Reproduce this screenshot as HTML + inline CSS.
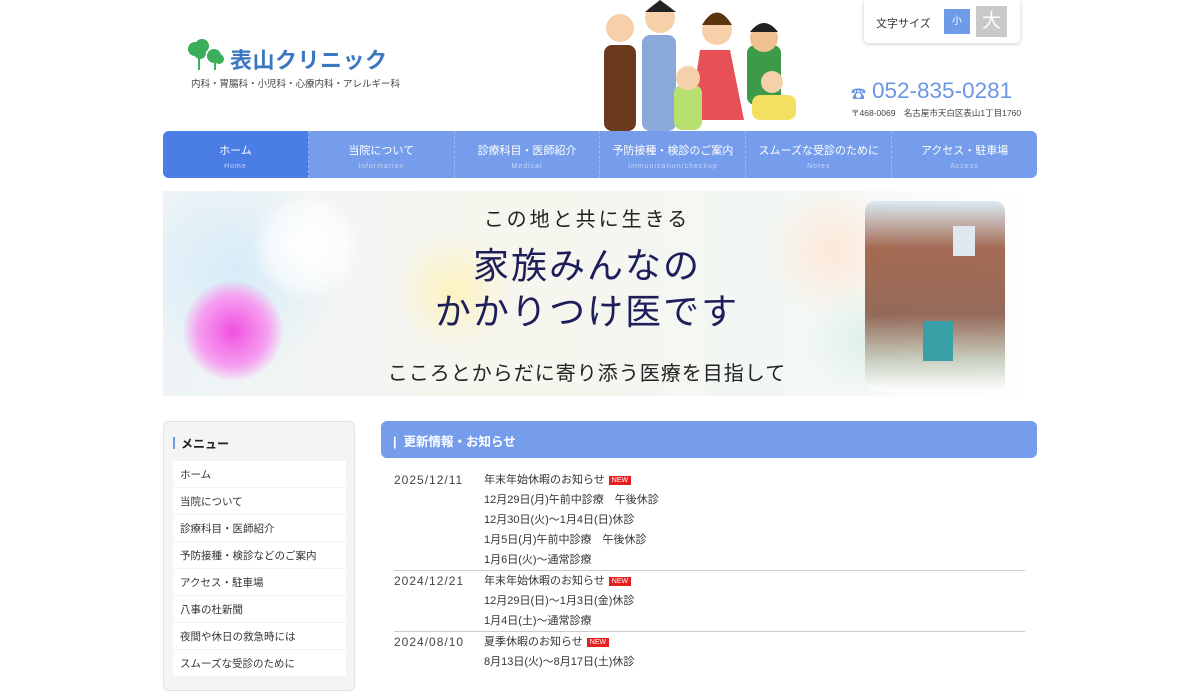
<!DOCTYPE html>
<html><head><meta charset="utf-8"><style>
*{margin:0;padding:0;box-sizing:border-box}
body{width:1200px;height:675px;overflow:hidden;background:#fff;font-family:"Liberation Sans","Noto Sans CJK JP",sans-serif;color:#333;position:relative}
.abs{position:absolute}
.nav{left:163px;top:131px;width:874px;height:47px;background:#759deb;border-radius:6px;display:flex;overflow:hidden}
.nav div{flex:1;text-align:center;color:#fff;font-size:11px;padding-top:11px;border-right:1px dashed #9cb9f0}
.nav div:last-child{border:none}
.nav div span{display:block;font-size:7px;letter-spacing:1px;color:#c9d8f7;margin-top:5px}
.nav div.on{background:#4a7de6}
.side{left:163px;top:421px;width:192px;height:270px;background:#f4f4f4;border:1px solid #e2e2e2;border-radius:5px}
.side .it{position:absolute;left:9px;width:173px;height:26px;background:#fff;font-size:10.5px;padding:6px 0 0 7px;color:#333}
.news{left:381px;top:421px;width:656px;height:37px;background:#759deb;border-radius:6px;color:#fff;font-size:12.5px;font-weight:bold;padding:10px 0 0 12px}
.row{position:absolute;font-size:11px;color:#333}
.date{font-size:12px;letter-spacing:1px;color:#444}
.new{display:inline-block;background:#e52020;color:#fff;font-size:7px;line-height:9px;padding:0 3px;margin-left:4px;vertical-align:1px}
.hr{position:absolute;left:394px;width:631px;height:1px;background:#ccc}
</style></head><body>
<svg class="abs" style="left:186px;top:38px" width="40" height="34" viewBox="0 0 40 34">
<circle cx="9" cy="11" r="7" fill="#3aae5a"/><circle cx="16" cy="8" r="7" fill="#3aae5a"/><circle cx="14" cy="15" r="6" fill="#3aae5a"/>
<circle cx="28" cy="18" r="7" fill="#3aae5a"/><circle cx="33" cy="21" r="5" fill="#3aae5a"/>
<rect x="12" y="18" width="2" height="14" fill="#3aae5a"/><rect x="28" y="22" width="2" height="10" fill="#3aae5a"/></svg>
<div class="abs" style="left:230px;top:43px;font-size:22px;font-weight:bold;color:#3a78c0;letter-spacing:0.5px">表山クリニック</div>
<div class="abs" style="left:191px;top:76px;font-size:9.5px;color:#444">内科・胃腸科・小児科・心療内科・アレルギー科</div>
<svg class="abs" style="left:592px;top:0" width="212" height="131" viewBox="0 0 212 131">
<rect x="12" y="45" width="32" height="86" rx="8" fill="#6b3a1e"/><circle cx="28" cy="28" r="14" fill="#f6d0a8"/>
<rect x="50" y="35" width="34" height="96" rx="8" fill="#8aa9d8"/><circle cx="68" cy="18" r="15" fill="#f6d0a8"/><path d="M53 12 L68 0 L84 12Z" fill="#222"/>
<path d="M108 50 L138 50 L152 120 L98 120Z" fill="#e85058"/><circle cx="125" cy="30" r="15" fill="#f6d0a8"/><path d="M110 25 Q125 0 140 25" fill="#5a3510"/>
<rect x="155" y="45" width="34" height="60" rx="8" fill="#3d9a48"/><circle cx="172" cy="38" r="14" fill="#f0c090"/><path d="M158 32 Q172 14 186 32" fill="#222"/>
<rect x="82" y="85" width="28" height="45" rx="8" fill="#b6e070"/><circle cx="96" cy="78" r="12" fill="#f6d0a8"/>
<rect x="160" y="95" width="44" height="25" rx="8" fill="#f4e060"/><circle cx="180" cy="82" r="11" fill="#f6d0a8"/>
</svg>
<div class="abs" style="left:864px;top:0;width:156px;height:43px;background:#fff;box-shadow:0 1px 4px rgba(0,0,0,.2);border-radius:0 0 4px 4px"></div>
<div class="abs" style="left:876px;top:15px;font-size:11px">文字サイズ</div>
<div class="abs" style="left:944px;top:9px;width:26px;height:25px;background:#6d9be8;color:#fff;font-size:10px;text-align:center;line-height:25px">小</div>
<div class="abs" style="left:976px;top:6px;width:31px;height:31px;background:#c9c9c9;color:#fff;font-size:19px;text-align:center;line-height:31px">大</div>
<div class="abs" style="left:851px;top:83px;font-size:15px;color:#6b96e4">&#9742;</div>
<div class="abs" style="left:872px;top:78px;font-size:22.5px;color:#6b96e4">052-835-0281</div>
<div class="abs" style="left:851px;top:107px;font-size:8.5px;color:#444">〒468-0069　名古屋市天白区表山1丁目1760</div>
<div class="abs nav"><div class="on">ホーム<span>Home</span></div><div>当院について<span>Information</span></div><div>診療科目・医師紹介<span>Medical</span></div><div>予防接種・検診のご案内<span>Immunization/checkup</span></div><div>スムーズな受診のために<span>Notes</span></div><div>アクセス・駐車場<span>Access</span></div></div>
<div class="abs" style="left:163px;top:191px;width:874px;height:205px;overflow:hidden;background:linear-gradient(90deg,#eef4f7,#f7f6ee 40%,#f2f7f4 70%,#fff)">
<div class="abs" style="left:-40px;top:-30px;width:220px;height:220px;border-radius:50%;background:radial-gradient(#d6ecf8,rgba(214,236,248,0) 70%)"></div>
<div class="abs" style="left:20px;top:90px;width:100px;height:100px;border-radius:50%;background:radial-gradient(#f050e0,#f6a0f0 50%,rgba(250,200,250,0) 72%)"></div>
<div class="abs" style="left:90px;top:0;width:110px;height:110px;border-radius:50%;background:radial-gradient(#fff,rgba(255,255,255,.6) 50%,rgba(255,255,255,0) 72%)"></div>
<div class="abs" style="left:230px;top:40px;width:120px;height:120px;border-radius:50%;background:radial-gradient(#fdf3c0,rgba(253,243,192,0) 70%)"></div>
<div class="abs" style="left:600px;top:-10px;width:140px;height:140px;border-radius:50%;background:radial-gradient(#fde8d8,rgba(253,232,216,0) 70%)"></div>
<div class="abs" style="left:640px;top:90px;width:120px;height:120px;border-radius:50%;background:radial-gradient(#dff0e8,rgba(223,240,232,0) 70%)"></div>
<div class="abs" style="left:702px;top:10px;width:140px;height:190px;background:linear-gradient(180deg,#d8e8f4 0%,#9a5a40 25%,#8a5a48 60%,#c8d0c0 85%,#fff 100%);border-radius:10px;opacity:.9"></div>
<div class="abs" style="left:790px;top:35px;width:22px;height:30px;background:#dfe8ee"></div>
<div class="abs" style="left:760px;top:130px;width:30px;height:40px;background:#3aa0a8"></div>
<div class="abs" style="left:0;top:12px;width:848px;text-align:center;font-size:20px;letter-spacing:3px;color:#222">この地と共に生きる</div>
<div class="abs" style="left:0;top:52px;width:848px;text-align:center;font-size:36px;letter-spacing:2px;color:#1e1e5a;line-height:46px">家族みんなの<br>かかりつけ医です</div>
<div class="abs" style="left:0;top:166px;width:848px;text-align:center;font-size:20px;letter-spacing:1px;color:#222">こころとからだに寄り添う医療を目指して</div>
</div>
<div class="abs side">
<div class="abs" style="left:9px;top:15px;width:2px;height:12px;background:#6d9be8"></div>
<div class="abs" style="left:17px;top:13px;font-size:12px;font-weight:bold;color:#222">メニュー</div>
<div class="it" style="top:39px">ホーム</div><div class="it" style="top:66px">当院について</div><div class="it" style="top:93px">診療科目・医師紹介</div><div class="it" style="top:120px">予防接種・検診などのご案内</div><div class="it" style="top:147px">アクセス・駐車場</div><div class="it" style="top:174px">八事の杜新聞</div><div class="it" style="top:201px">夜間や休日の救急時には</div><div class="it" style="top:228px">スムーズな受診のために</div>
</div>
<div class="abs news">|&nbsp; 更新情報・お知らせ</div>
<div class="row date" style="left:394px;top:473px">2025/12/11</div>
<div class="row" style="left:484px;top:470px;line-height:20px">年末年始休暇のお知らせ<span class="new">NEW</span><br>12月29日(月)午前中診療　午後休診<br>12月30日(火)～1月4日(日)休診<br>1月5日(月)午前中診療　午後休診<br>1月6日(火)～通常診療</div>
<div class="hr" style="top:570px"></div>
<div class="row date" style="left:394px;top:574px">2024/12/21</div>
<div class="row" style="left:484px;top:571px;line-height:20px">年末年始休暇のお知らせ<span class="new">NEW</span><br>12月29日(日)～1月3日(金)休診<br>1月4日(土)～通常診療</div>
<div class="hr" style="top:631px"></div>
<div class="row date" style="left:394px;top:635px">2024/08/10</div>
<div class="row" style="left:484px;top:632px;line-height:20px">夏季休暇のお知らせ<span class="new">NEW</span><br>8月13日(火)～8月17日(土)休診</div>
</body></html>
